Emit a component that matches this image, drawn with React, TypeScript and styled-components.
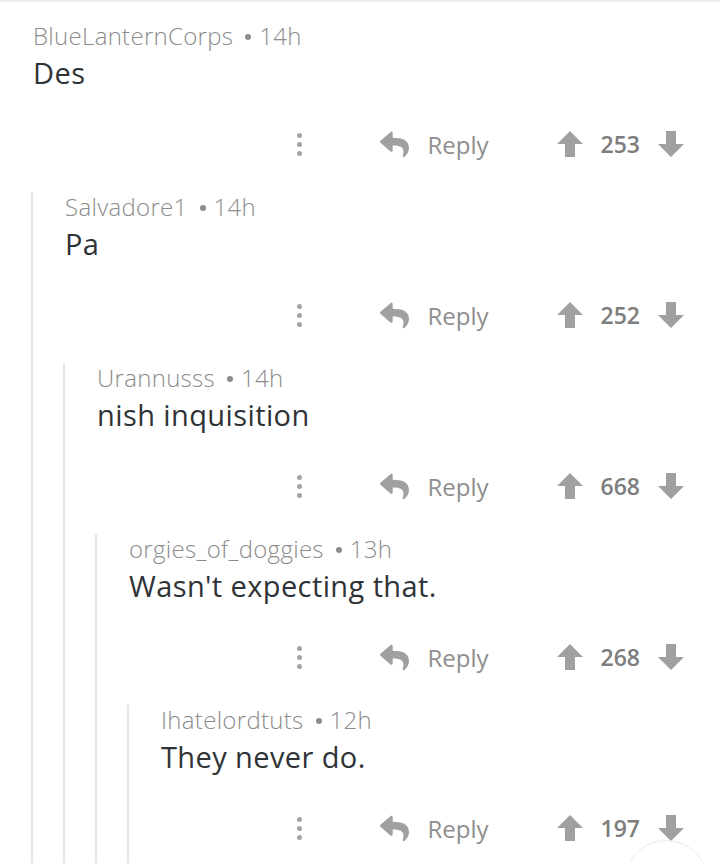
import React from "react";
import styled, { createGlobalStyle } from "styled-components";
import { FaReply } from "react-icons/fa";

type CommentData = {
  author: string;
  age: string;
  text: string;
  score: number;
  reply?: CommentData;
};

const thread: CommentData = {
  author: "BlueLanternCorps",
  age: "14h",
  text: "Des",
  score: 253,
  reply: {
    author: "Salvadore1",
    age: "14h",
    text: "Pa",
    score: 252,
    reply: {
      author: "Urannusss",
      age: "14h",
      text: "nish inquisition",
      score: 668,
      reply: {
        author: "orgies_of_doggies",
        age: "13h",
        text: "Wasn't expecting that.",
        score: 268,
        reply: {
          author: "Ihatelordtuts",
          age: "12h",
          text: "They never do.",
          score: 197,
        },
      },
    },
  },
};

const GlobalStyle = createGlobalStyle`
  html, body {
    margin: 0;
    padding: 0;
    background: #ffffff;
  }
  body {
    font-family: "Open Sans", "Liberation Sans", sans-serif;
    overflow: hidden;
  }
`;

const Page = styled.div`
  position: relative;
  width: 720px;
  height: 863px;
  box-sizing: border-box;
  border-top: 2px solid #ededed;
  padding: 19px 36px 0 33px;
  overflow: hidden;
`;

const Block = styled.div<{ $nested: boolean }>`
  ${(p) =>
    p.$nested &&
    `
    margin-left: -2px;
    padding-left: 32px;
    border-left: 2px solid #e6e6e6;
    margin-top: 23px;
    padding-bottom: 400px;
  `}
`;

const Meta = styled.div`
  height: 30px;
  line-height: 30px;
  font-size: 24px;
  font-weight: 300;
  letter-spacing: 0.3px;
  color: #8c8c8c;
  white-space: nowrap;
`;

const Dot = styled.span`
  display: inline-block;
  width: 6px;
  height: 6px;
  border-radius: 50%;
  background: #8c8c8c;
  margin: 0 8px 0 12px;
  vertical-align: 5px;
`;

const Body = styled.div`
  margin-top: 2px;
  height: 40px;
  line-height: 40px;
  font-size: 29px;
  letter-spacing: 0.4px;
  color: #2f3336;
  white-space: nowrap;
`;

const Actions = styled.div`
  margin-top: 26px;
  height: 50px;
  display: flex;
  align-items: center;
  justify-content: flex-end;
`;

const MoreDots = styled.span`
  display: flex;
  flex-direction: column;
  gap: 4px;
  margin-right: 78px;
  span {
    width: 5px;
    height: 5px;
    border-radius: 50%;
    background: #a3a3a3;
  }
`;

const ReplyButton = styled.span`
  display: flex;
  align-items: center;
  gap: 18px;
  color: #8e8e8e;
  font-size: 24px;
  svg {
    width: 29px;
    height: 29px;
    color: #a0a0a0;
  }
`;

const Votes = styled.span`
  display: flex;
  align-items: center;
  gap: 18px;
  margin-left: 68px;
`;

const Score = styled.span`
  font-size: 23px;
  font-weight: 600;
  color: #7d7d7d;
`;

const Fab = styled.div`
  position: absolute;
  left: 624px;
  top: 838px;
  width: 82px;
  height: 82px;
  border-radius: 50%;
  border: 1px solid #ececec;
  background: #ffffff;
`;

const Arrow = ({ down }: { down?: boolean }) => (
  <svg
    width="26"
    height="26"
    viewBox="0 0 26 26"
    style={down ? { transform: "rotate(180deg)" } : undefined}
  >
    <path d="M13 0 L26 13 L18 13 L18 26 L8 26 L8 13 L0 13 Z" fill="#a0a0a0" />
  </svg>
);

const Comment = ({ data, nested }: { data: CommentData; nested: boolean }) => (
  <Block $nested={nested}>
    <Meta>
      {data.author}
      <Dot />
      {data.age}
    </Meta>
    <Body>{data.text}</Body>
    <Actions>
      <MoreDots>
        <span />
        <span />
        <span />
      </MoreDots>
      <ReplyButton>
        <FaReply />
        Reply
      </ReplyButton>
      <Votes>
        <Arrow />
        <Score>{data.score}</Score>
        <Arrow down />
      </Votes>
    </Actions>
    {data.reply && <Comment data={data.reply} nested />}
  </Block>
);

export default function App() {
  return (
    <>
      <GlobalStyle />
      <Page>
        <Comment data={thread} nested={false} />
        <Fab />
      </Page>
    </>
  );
}
